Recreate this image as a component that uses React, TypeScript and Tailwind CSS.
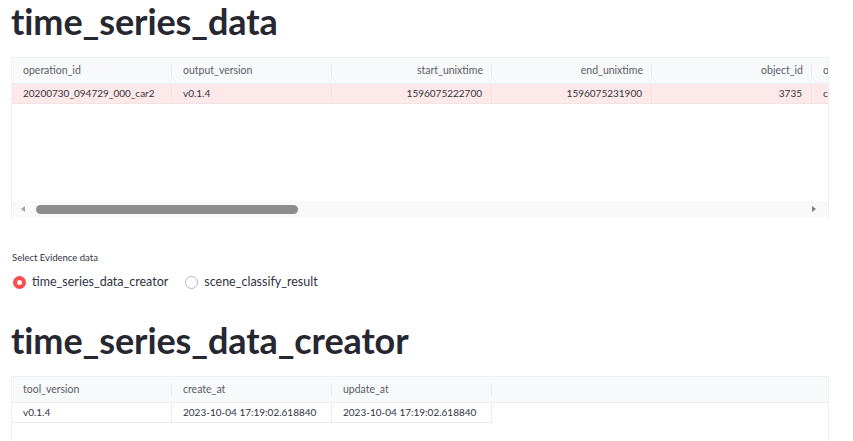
import React from 'react';

const font = { fontFamily: '"Lato", "Liberation Sans", sans-serif' };

const cols1 = [
  { name: 'operation_id', value: '20200730_094729_000_car2', right: false },
  { name: 'output_version', value: 'v0.1.4', right: false },
  { name: 'start_unixtime', value: '1596075222700', right: true },
  { name: 'end_unixtime', value: '1596075231900', right: true },
  { name: 'object_id', value: '3735', right: true },
  { name: 'object_type', value: 'car', right: false },
];

const cols2 = [
  { name: 'tool_version', value: 'v0.1.4' },
  { name: 'create_at', value: '2023-10-04 17:19:02.618840' },
  { name: 'update_at', value: '2023-10-04 17:19:02.618840' },
];

function HeaderCell({ label, right }: { label: string; right?: boolean }) {
  return (
    <div className="relative w-[160px] shrink-0 h-full flex items-center">
      <span className={`w-full px-[11px] whitespace-nowrap overflow-hidden text-[10.5px] text-[#5a5c66] ${right ? 'text-right pr-[9px]' : ''}`}>
        {label}
      </span>
      <div className="absolute right-0 top-[6px] bottom-[6px] w-px bg-[#e8e9ec]" />
    </div>
  );
}

export default function App() {
  return (
    <div className="h-[441px] w-[853px] overflow-hidden bg-white text-[#31333f]" style={font}>
      <h1 className="pl-[11px] pt-[1px] h-[57px] text-[36px] leading-[40px] font-bold text-[#262730] tracking-[-0.1px]">
        time_series_data
      </h1>

      {/* table 1 */}
      <div className="ml-[11px] w-[818px] h-[162px] border-l border-r border-t border-[#f0f0f2] flex flex-col overflow-hidden">
        <div className="h-[26px] flex bg-[#f8f9fb] border-b border-[#eceef1] shrink-0">
          {cols1.map((c) => (
            <HeaderCell key={c.name} label={c.name} right={c.right} />
          ))}
        </div>
        <div className="h-[20px] flex bg-[#fde9e9] border-b border-[#efe4e4] shrink-0">
          {cols1.map((c) => (
            <div key={c.name} className="w-[160px] shrink-0 border-r border-[#f3e0e0] flex items-center">
              <span className={`w-full px-[11px] whitespace-nowrap overflow-hidden text-[10px] text-[#31333f] ${c.right ? 'text-right pr-[9px]' : ''}`}>
                {c.value}
              </span>
            </div>
          ))}
        </div>
        <div className="flex-1" />
        <div className="h-[16px] mb-[2px] bg-[#f9f9f9] flex items-center shrink-0">
          <svg width="22" height="16" viewBox="0 0 22 16" className="shrink-0">
            <path d="M13 5 L9 8 L13 11 Z" fill="#a3a3a3" />
          </svg>
          <div className="ml-[2px] w-[262px] h-[9px] rounded-full bg-[#8d8d8d]" />
          <div className="flex-1" />
          <svg width="22" height="16" viewBox="0 0 22 16" className="shrink-0">
            <path d="M6 5 L10 8 L6 11 Z" fill="#7f7f7f" />
          </svg>
        </div>
      </div>

      {/* radio */}
      <div className="mt-[32px] pl-[12px]">
        <div className="text-[9.5px] leading-[14px] text-[#31333f]">Select Evidence data</div>
        <div className="mt-[8px] flex items-center text-[12.5px] leading-[18px]">
          <span className="w-[13px] h-[13px] rounded-full bg-[#ff4b4b] flex items-center justify-center ml-[1px]">
            <span className="w-[5px] h-[5px] rounded-full bg-white" />
          </span>
          <span className="ml-[6px] text-[#31333f]">time_series_data_creator</span>
          <span className="ml-[17px] w-[13px] h-[13px] rounded-full border border-[#b8b9be] bg-white" />
          <span className="ml-[6px] text-[#31333f]">scene_classify_result</span>
        </div>
      </div>

      <h1 className="mt-[29px] pl-[11px] h-[56px] text-[36px] leading-[40px] font-bold text-[#262730] tracking-[-0.1px]">
        time_series_data_creator
      </h1>

      {/* table 2 */}
      <div className="ml-[11px] w-[818px] h-[80px] border-l border-r border-t border-[#f0f0f2] flex flex-col">
        <div className="h-[26px] flex bg-[#f8f9fb] border-b border-[#eceef1] shrink-0">
          {cols2.map((c) => (
            <HeaderCell key={c.name} label={c.name} />
          ))}
        </div>
        <div className="h-[20px] flex shrink-0">
          {cols2.map((c) => (
            <div key={c.name} className="w-[160px] shrink-0 border-r border-b border-[#e9eaed] flex items-center">
              <span className="px-[11px] whitespace-nowrap text-[10px] text-[#31333f]">{c.value}</span>
            </div>
          ))}
        </div>
      </div>
    </div>
  );
}
